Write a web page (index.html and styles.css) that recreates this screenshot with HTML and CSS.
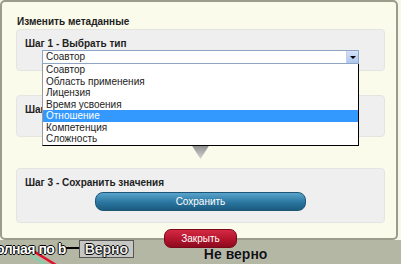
FILE: index.html
```html
<!DOCTYPE html>
<html lang="ru">

<head>
    <meta charset="UTF-8">
    <title>Изменить метаданные</title>
    <link rel="stylesheet" href="styles.css">
</head>

<body>
    <!-- page behind the dialog -->
    <div class="page">
        <div class="strip">
            <svg class="edges" width="34" height="16" viewBox="0 0 34 16">
                <line x1="0" y1="0" x2="26" y2="16" stroke="#e0102a" stroke-width="2.5" />
                <line x1="-2" y1="5" x2="16" y2="16" stroke="#7fd3a8" stroke-width="2" />
            </svg>
            <span class="node-label">олная по b</span>
            <span class="link"></span>
            <span class="answer">Верно</span>
            <span class="answer-wrong">Не верно</span>
        </div>
    </div>

    <div class="dialog">
        <h2 class="dialog-title">Изменить метаданные</h2>

        <section class="step">
            <h3>Шаг 1 - Выбрать тип</h3>
            <div class="combo">
                <div class="combo-field">
                    <span>Соавтор</span>
                    <span class="combo-button"></span>
                </div>
                <ul class="combo-list">
                    <li>Соавтор</li>
                    <li>Область применения</li>
                    <li>Лицензия</li>
                    <li>Время усвоения</li>
                    <li class="selected">Отношение</li>
                    <li>Компетенция</li>
                    <li>Сложность</li>
                </ul>
            </div>
        </section>

        <div class="step-arrow first"></div>

        <section class="step">
            <h3>Шаг 2</h3>
            <div class="combo">
                <div class="combo-field">
                    <span></span>
                    <span class="combo-button"></span>
                </div>
            </div>
        </section>

        <div class="step-arrow"></div>

        <section class="step step-save">
            <h3>Шаг 3 - Сохранить значения</h3>
            <button class="save-button">Сохранить</button>
        </section>

        <div class="dialog-footer">
            <button class="close-button">Закрыть</button>
        </div>
    </div>
</body>

</html>
```

FILE: styles.css
```css
body {
    margin: 0;
    font-family: 'Liberation Sans', Arial, sans-serif;
    color: #222;
}

.page {
    height: 264px;
    display: flex;
    flex-direction: column;
    justify-content: flex-end;
    background-color: #f6f6ea;
}

.strip {
    position: relative;
    height: 24px;
    display: flex;
    align-items: flex-start;
    background-color: #b5b7a5;
    overflow: hidden;
}

.edges {
    position: absolute;
    left: 30px;
    top: 9px;
}

.node-label {
    position: relative;
    margin-left: -4px;
    margin-top: 1px;
    font-size: 14px;
    font-weight: bold;
    line-height: 16px;
    letter-spacing: -0.5px;
    color: #fff;
    text-shadow: 1px 0 0 #000, -1px 0 0 #000, 0 1px 0 #000, 0 -1px 0 #000;
}

.link {
    width: 13px;
    height: 2px;
    margin-top: 7px;
    background-color: #000;
}

.answer {
    width: 55px;
    height: 18px;
    box-sizing: border-box;
    border: 1px solid #555;
    background-color: #c6c6c2;
    font-size: 14px;
    font-weight: bold;
    line-height: 16px;
    text-align: center;
    color: #eee;
    text-shadow: 1px 0 0 #000, -1px 0 0 #000, 0 1px 0 #000, 0 -1px 0 #000;
}

.answer-wrong {
    margin-left: 70px;
    margin-top: 6px;
    font-size: 14px;
    font-weight: bold;
    line-height: 16px;
    color: #111;
    text-shadow: 0 0 1px #ddd;
}

/* dialog */

.dialog {
    position: absolute;
    top: 0;
    left: 0;
    width: 398px;
    box-sizing: border-box;
    padding: 14px 11px 0 14px;
    background-color: #fbfbec;
    border: 2px solid #9c9c8a;
    border-radius: 5px;
}

.dialog-title {
    margin: 0 0 1px 1px;
    font-size: 10px;
    line-height: 12px;
    font-weight: bold;
}

.step {
    background-color: #efeff0;
    border: 1px solid #e4e4e2;
    border-radius: 4px;
    padding: 8px 8px 6px;
}

.step h3 {
    margin: 0;
    font-size: 10px;
    line-height: 12px;
    font-weight: bold;
    white-space: nowrap;
}

.combo {
    position: relative;
    width: 317px;
    margin: 0 auto;
}

.combo-field {
    height: 14px;
    box-sizing: border-box;
    display: flex;
    justify-content: space-between;
    padding-left: 3px;
    border: 1px solid #8ea6c4;
    background-color: #fff;
    font-size: 10px;
    line-height: 12px;
}

.combo-button {
    position: relative;
    width: 11px;
    height: 12px;
    background: linear-gradient(#d4e2f8, #aec6ee);
    border-left: 1px solid #c2d2ec;
}

.combo-button::after {
    content: '';
    position: absolute;
    left: 3px;
    top: 5px;
    border-left: 3px solid transparent;
    border-right: 3px solid transparent;
    border-top: 3px solid #000;
}

.combo-list {
    position: absolute;
    top: 100%;
    left: 0;
    z-index: 2;
    width: 317px;
    box-sizing: border-box;
    margin: 0;
    padding: 0;
    list-style: none;
    background-color: #fff;
    border: 1px solid #000;
    border-top: none;
    border-left-color: #999;
    font-size: 10px;
    line-height: 11.5px;
}

.combo-list li {
    padding-left: 3px;
}

.combo-list .selected {
    background-color: #3399ff;
    color: #fff;
}

.step-arrow {
    width: 18px;
    height: 14px;
    margin: 5px auto;
    background: linear-gradient(#8c8c8c, #d4d4d4);
    clip-path: polygon(0 0, 100% 0, 50% 100%);
}

.step-arrow:not(.first) {
    margin: 8px auto 9px;
}

.step-save {
    padding-bottom: 11px;
}

.save-button {
    display: block;
    width: 211px;
    height: 19px;
    margin: 3px auto 0;
    padding: 0;
    border: 1px solid #1d5674;
    border-radius: 8px;
    background: linear-gradient(#5aa4cc, #2a76a0 55%, #1c5b80);
    color: #fff;
    font-family: inherit;
    font-size: 10px;
}

.dialog-footer {
    display: flex;
    justify-content: center;
    margin-top: 6px;
    margin-bottom: -10px;
}

.close-button {
    width: 73px;
    height: 19px;
    padding: 0;
    border: 1px solid #7a0818;
    border-radius: 7px;
    background: linear-gradient(#d42a44, #b3142c 55%, #8c0a1e);
    color: #fff;
    font-family: inherit;
    font-size: 10px;
}
```
